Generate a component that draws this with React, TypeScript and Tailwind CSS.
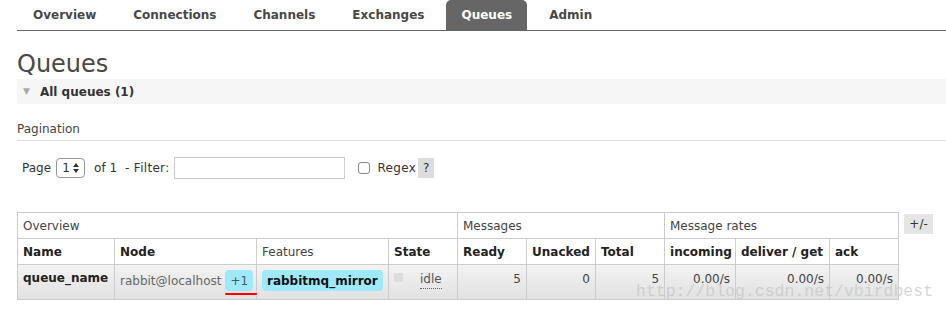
import React from "react"

const tabs = ["Overview", "Connections", "Channels", "Exchanges", "Queues", "Admin"]

const cols = [97, 142, 132, 69, 69, 69, 69, 71, 94, 69]

const App = () => {
	return (
		<main className="relative h-[312px] w-[946px] overflow-hidden bg-white font-['DejaVu_Sans',Verdana,sans-serif] text-[12px] text-[#444]">
			<nav className="ml-[17px] flex h-[31px] border-b border-[#666] pl-px">
				<ul className="flex gap-[7px]">
					{tabs.map((t) => (
						<li
							key={t}
							className={
								t === "Queues"
									? "flex h-[30px] items-center rounded-t-[5px] bg-[#666] px-[15px] font-bold text-white"
									: "flex h-[30px] items-center px-[15px] font-bold text-[#484848]"
							}>
							{t}
						</li>
					))}
				</ul>
			</nav>

			<h1 className="ml-[17px] mt-[19px] h-[29px] text-[24px] leading-[29px] text-[#484848]">Queues</h1>
			<div className="ml-[17px] flex h-[25px] items-center bg-[#f6f6f6]">
				<span className="ml-[6px] mr-[10px] text-[9px] text-[#aaa]">▼</span>
				<span className="font-bold text-[#333]">All queues (1)</span>
			</div>

			<p className="ml-[17px] mt-[18px] border-b border-[#ddd] pb-[3px] leading-[15px]">Pagination</p>

			<div className="ml-[22px] mt-[16px] flex h-[22px] items-center text-[#333]">
				<span>Page</span>
				<span className="ml-[5px] flex h-[20px] w-[29px] items-center justify-center gap-[3px] rounded-[4px] border border-[#999] text-[12px]">
					1
					<svg width="6" height="10" viewBox="0 0 6 10">
						<path d="M0 4 L3 0 L6 4 Z M0 6 L3 10 L6 6 Z" fill="#333" />
					</svg>
				</span>
				<span className="ml-[9px]">of 1</span>
				<span className="ml-[8px] tracking-[0.3px]">- Filter:</span>
				<span className="ml-[5px] h-[22px] w-[171px] border border-[#ccc]"></span>
				<span className="ml-[13px] h-[12px] w-[12px] rounded-[3px] border border-[#888]"></span>
				<span className="ml-[7px] tracking-[0.3px]">Regex</span>
				<span className="ml-[2px] flex h-[20px] w-[16px] items-center justify-center bg-[#ddd]">?</span>
			</div>

			<div className="ml-[17px] mt-[33px] flex items-start">
				<table className="w-[881px] table-fixed border-collapse border border-[#ccc]">
					<colgroup>
						{cols.map((w, i) => (
							<col key={i} style={{ width: w }} />
						))}
					</colgroup>
					<thead>
						<tr className="h-[26px]">
							<th colSpan={4} className="border border-[#ccc] px-[5px] text-left font-normal">Overview</th>
							<th colSpan={3} className="border border-[#ccc] px-[5px] text-left font-normal">Messages</th>
							<th colSpan={3} className="border border-[#ccc] px-[5px] text-left font-normal">Message rates</th>
						</tr>
						<tr className="h-[26px] text-[#222]">
							<th className="border border-[#ccc] px-[5px] text-left font-bold">Name</th>
							<th className="border border-[#ccc] px-[5px] text-left font-bold">Node</th>
							<th className="border border-[#ccc] px-[5px] text-left font-normal text-[#444]">Features</th>
							<th className="border border-[#ccc] px-[5px] text-left font-bold">State</th>
							<th className="border border-[#ccc] px-[5px] text-left font-bold">Ready</th>
							<th className="border border-[#ccc] px-[5px] text-left font-bold">Unacked</th>
							<th className="border border-[#ccc] px-[5px] text-left font-bold">Total</th>
							<th className="border border-[#ccc] px-[5px] text-left font-bold">incoming</th>
							<th className="border border-[#ccc] px-[5px] text-left font-bold">deliver / get</th>
							<th className="border border-[#ccc] px-[5px] text-left font-bold">ack</th>
						</tr>
					</thead>
					<tbody>
						<tr className="h-[35px] bg-gradient-to-b from-[#f3f3f3] to-[#e1e1e1]">
							<td className="border border-[#ccc] px-[5px] pt-[4px] align-top font-bold text-[#222]">queue_name</td>
							<td className="border border-[#ccc] px-[5px] pt-[5px] align-top">
								<div className="flex items-center">
									<span className="text-[#666]">rabbit@localhost</span>
									<span className="relative ml-[4px] flex h-[21px] items-center rounded-[4px] bg-[#9ee9fd] px-[5px] text-[#555]">
										+1
										<span className="absolute left-0 top-[23px] h-[2px] w-[32px] rounded-full bg-[#f00]"></span>
									</span>
								</div>
							</td>
							<td className="border border-[#ccc] px-[5px] pt-[5px] align-top">
								<span className="flex h-[21px] w-fit items-center rounded-[4px] bg-[#9ee9fd] px-[5px] font-bold text-[#111]">
									rabbitmq_mirror
								</span>
							</td>
							<td className="border border-[#ccc] px-[5px] pt-[8px] align-top">
								<div className="flex items-start">
									<span className="h-[9px] w-[9px] bg-[#ddd]"></span>
									<span className="ml-[17px] -mt-[3px] border-b border-dotted border-[#666] text-[#555]">idle</span>
								</div>
							</td>
							<td className="border border-[#ccc] px-[5px] pt-[5px] text-right align-top">5</td>
							<td className="border border-[#ccc] px-[5px] pt-[5px] text-right align-top">0</td>
							<td className="border border-[#ccc] px-[5px] pt-[5px] text-right align-top">5</td>
							<td className="border border-[#ccc] px-[5px] pt-[5px] text-right align-top">0.00/s</td>
							<td className="border border-[#ccc] px-[5px] pt-[5px] text-right align-top">0.00/s</td>
							<td className="border border-[#ccc] px-[5px] pt-[5px] text-right align-top">0.00/s</td>
						</tr>
					</tbody>
				</table>
				<span className="ml-[5px] mt-[2px] flex h-[20px] w-[29px] items-center justify-center bg-[#e5e5e5] text-[#333]">+/-</span>
			</div>

			<span className="pointer-events-none absolute left-[636px] top-[282px] font-['Liberation_Mono',monospace] text-[16.5px] leading-[20px] text-[#c4c4c4]/70">
				http://blog.csdn.net/vbirdbest
			</span>
		</main>
	)
}

export default App
